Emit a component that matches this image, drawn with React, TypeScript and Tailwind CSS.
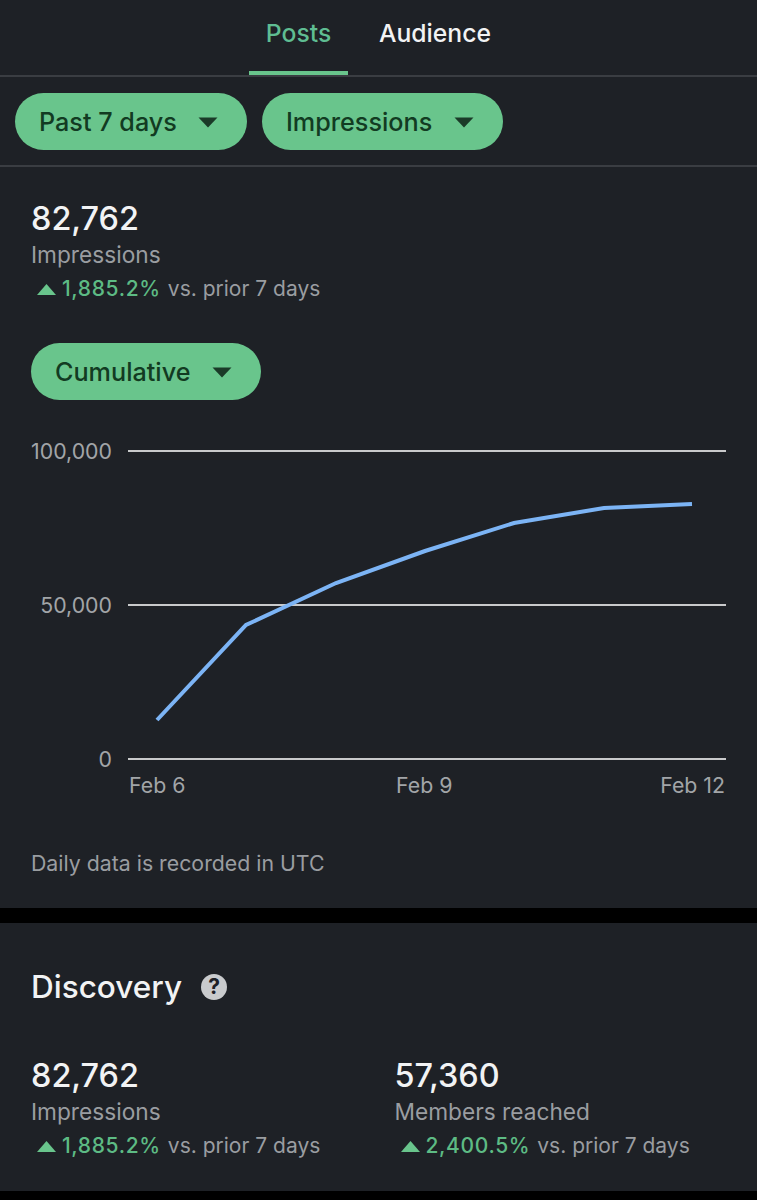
import React from 'react';

const font = { fontFamily: 'Inter, "Noto Sans", sans-serif' };

const Caret = () => (
    <svg width="20" height="11" viewBox="0 0 20 11" className="shrink-0 mt-[2px]">
        <path d="M0.5 0.5H19.5L10 10.5Z" fill="#1b3a28" />
    </svg>
);

const Pill = ({ label, width, gap }: { label: string; width: string; gap: string }) => (
    <div className={`flex items-center h-[57px] rounded-[29px] bg-[#69c58c] pl-[24px] text-[#123b22] text-[25.2px] font-medium ${width} ${gap}`}>
        <span className="pt-[3px]">{label}</span>
        <Caret />
    </div>
);

const Stat = ({ value, label, change }: { value: string; label: string; change: string }) => (
    <div className="flex flex-col">
        <div className="text-[32.4px] leading-[40px] font-medium text-[#f2f3f4]">{value}</div>
        <div className="text-[22.7px] leading-[28px] mt-[2px] text-[#9a9da1]">{label}</div>
        <div className="flex items-center text-[21px] leading-[28px] mt-[6px] pl-[6px]">
            <svg width="19" height="11" viewBox="0 0 19 11" className="mr-[6px]">
                <path d="M9.5 0L19 11H0Z" fill="#69c58c" />
            </svg>
            <span className="font-medium text-[#5dbb84] tracking-[0.65px]">{change}</span>
            <span className="ml-[7px] text-[#9a9da1]">vs. prior 7 days</span>
        </div>
    </div>
);

const Chart = () => (
    <svg width="757" height="400" viewBox="0 0 757 400" className="block">
        <g fontSize="21.3" fill="#a2a5a8" style={font}>
            <text x="112" y="59" textAnchor="end">100,000</text>
            <text x="112" y="213" textAnchor="end">50,000</text>
            <text x="112" y="367" textAnchor="end">0</text>
            <text x="129" y="393">Feb 6</text>
            <text x="396" y="393">Feb 9</text>
            <text x="725" y="393" textAnchor="end">Feb 12</text>
        </g>
        <g stroke="#c9cacb" strokeWidth="2">
            <line x1="128" y1="51" x2="726" y2="51" />
            <line x1="128" y1="205" x2="726" y2="205" />
            <line x1="128" y1="359" x2="726" y2="359" />
        </g>
        <polyline
            points="157,320 246,225 336,183 425,151 514,123 604,108 692,104"
            fill="none"
            stroke="#7cb4f5"
            strokeWidth="4"
        />
    </svg>
);

export default function App() {
    return (
        <div className="w-[757px] h-[1200px] overflow-hidden bg-black" style={font}>
            <div className="bg-[#1e2126] h-[908px]">
                {/* Tabs */}
                <div className="flex h-[77px] pl-[249px] border-b-2 border-[#3a3d42] text-[24.7px] font-medium">
                    <div className="w-[99px] h-[75px] flex justify-center pt-[15px] border-b-4 border-[#69c58c] text-[#5fbd92]">Posts</div>
                    <div className="ml-[31px] pt-[15px] text-[#f2f3f4]">Audience</div>
                </div>

                {/* Filters */}
                <div className="flex gap-[15px] h-[90px] items-center pl-[15px] border-b-2 border-[#3a3d42]">
                    <Pill label="Past 7 days" width="w-[232px]" gap="gap-[21px]" />
                    <Pill label="Impressions" width="w-[241px]" gap="gap-[22px]" />
                </div>

                <div className="pl-[31px] pt-[32px]">
                    <Stat value="82,762" label="Impressions" change="1,885.2%" />
                    <div className="mt-[40px]">
                        <Pill label="Cumulative" width="w-[230px]" gap="gap-[21px]" />
                    </div>
                </div>

                <Chart />

                <div className="pl-[31px] mt-[49px] text-[21.3px] leading-[28px] text-[#9a9da1]">Daily data is recorded in UTC</div>
            </div>

            {/* Discovery */}
            <div className="mt-[15px] h-[268px] bg-[#1e2126] px-[31px] pt-[42px]">
                <div className="flex items-center gap-[19px]">
                    <div className="text-[31.5px] leading-[44px] font-medium text-[#f2f3f4]">Discovery</div>
                    <div className="flex items-center justify-center w-[26px] h-[26px] rounded-full bg-[#c9cbcd] text-[#1d2026] text-[21px] font-bold">?</div>
                </div>
                <div className="grid grid-cols-[363.5px_1fr] mt-[47px]">
                    <Stat value="82,762" label="Impressions" change="1,885.2%" />
                    <Stat value="57,360" label="Members reached" change="2,400.5%" />
                </div>
            </div>
        </div>
    );
}
